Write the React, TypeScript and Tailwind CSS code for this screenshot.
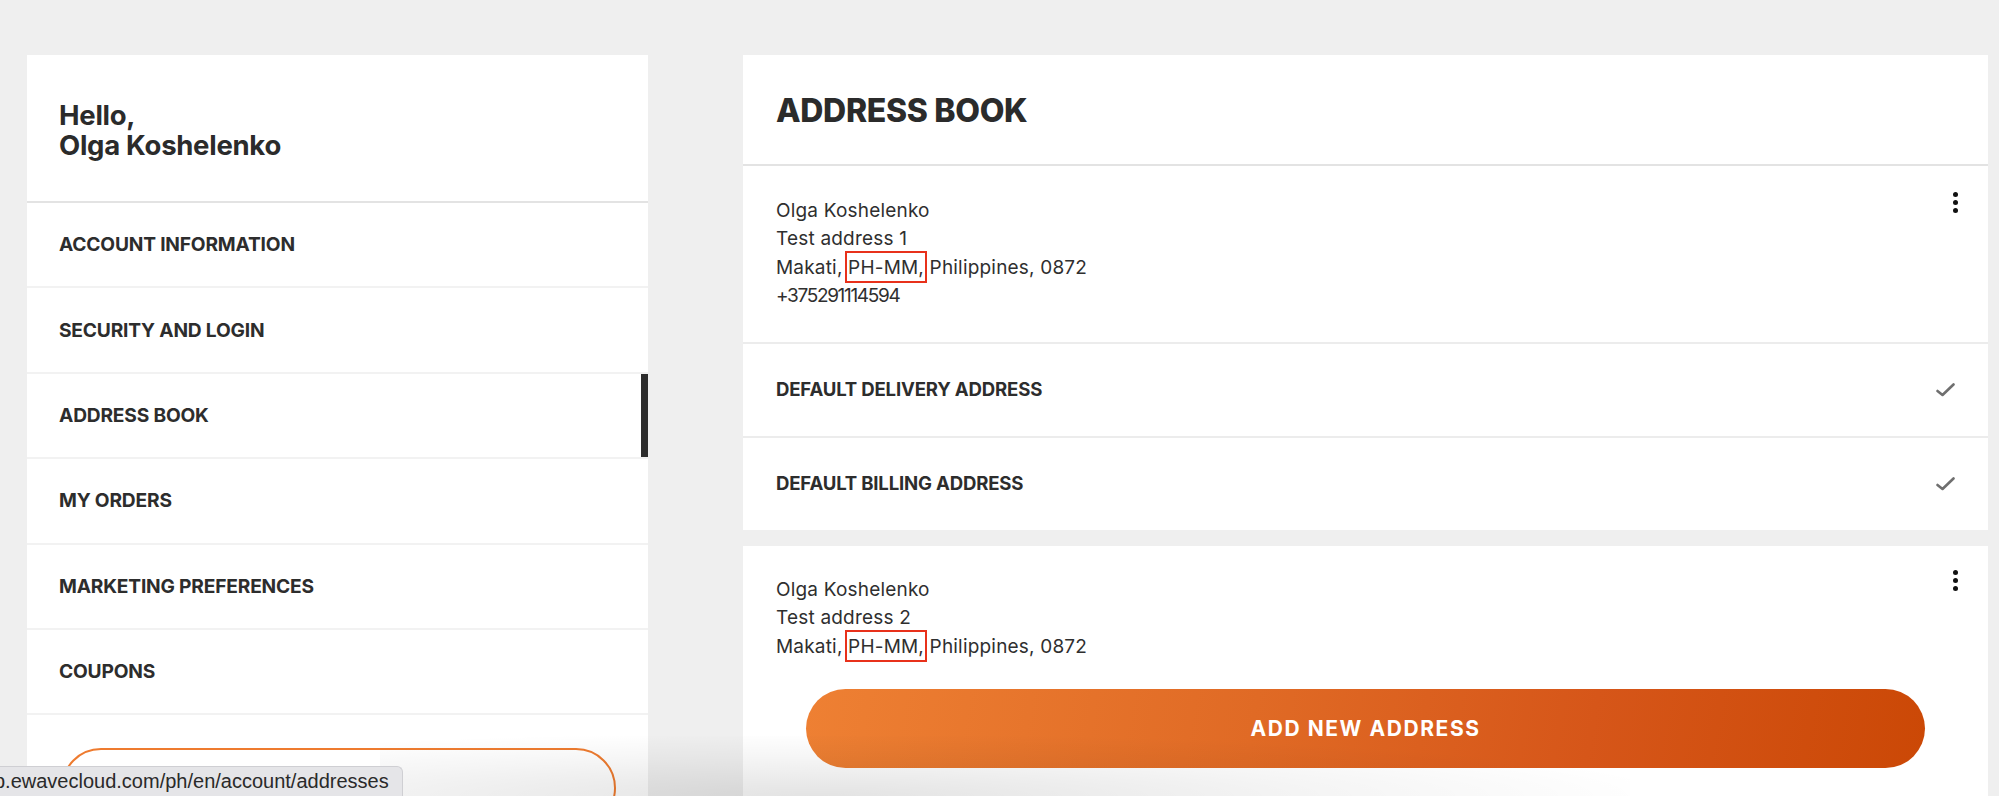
import React from "react";

const navItems = [
  "ACCOUNT INFORMATION",
  "SECURITY AND LOGIN",
  "ADDRESS BOOK",
  "MY ORDERS",
  "MARKETING PREFERENCES",
  "COUPONS",
];

function Kebab() {
  return (
    <div className="flex flex-col items-center gap-[3px] pt-[1px]">
      <span className="block h-[5px] w-[5px] rounded-full bg-[#111]" />
      <span className="block h-[5px] w-[5px] rounded-full bg-[#111]" />
      <span className="block h-[5px] w-[5px] rounded-full bg-[#111]" />
    </div>
  );
}

function Check() {
  return (
    <svg width="19" height="14" viewBox="0 0 19 14" fill="none">
      <path
        d="M1.5 8 L6.5 12 L17.5 1.5"
        stroke="#6f6f6f"
        strokeWidth="2.6"
        strokeLinecap="round"
        strokeLinejoin="round"
      />
    </svg>
  );
}

function Marked({ children }: { children: React.ReactNode }) {
  return (
    <span className="relative">
      {children}
      <span className="pointer-events-none absolute -left-[3px] -right-[3px] -top-[5px] -bottom-[4px] border-2 border-[#e8311b]" />
    </span>
  );
}

function AddressLines({ line2, phone }: { line2: string; phone?: string }) {
  return (
    <div className="text-[19px] leading-[28.3px] tracking-[0.01em] text-[#2f2f2f]">
      <div>Olga Koshelenko</div>
      <div>{line2}</div>
      <div>
        Makati, <Marked>PH-MM,</Marked> Philippines, 0872
      </div>
      {phone && <div className="tracking-[-0.07em]">{phone}</div>}
    </div>
  );
}

export default function App() {
  return (
    <div className="relative h-[796px] w-[1999px] overflow-hidden bg-[#efefef] font-['Inter','Liberation_Sans',sans-serif] text-[#2b2b2b]">
      <div className="flex items-start pl-[27px] pt-[55px]">
        {/* Sidebar */}
        <aside className="w-[621px] shrink-0 bg-white">
          <div className="flex flex-col gap-[1px] border-b-2 border-[#e3e3e3] pb-[41px] pl-[32px] pt-[46px] text-[27.5px] font-bold leading-[29px] tracking-[-0.01em] text-[#2b2b2b]">
            <div>Hello,</div>
            <div>Olga Koshelenko</div>
          </div>
          <nav>
            {navItems.map((item) => (
              <div
                key={item}
                className="relative flex h-[85.4px] items-center border-b-2 border-[#f2f2f2] pl-[32px] text-[19.2px] font-bold tracking-[-0.01em] text-[#2d2d2d]"
              >
                {item}
                {item === "ADDRESS BOOK" && (
                  <span className="absolute bottom-0 right-0 top-0 w-[7px] bg-[#2d2d2d]" />
                )}
              </div>
            ))}
          </nav>
          <div className="pb-[40px] pl-[34px] pr-[32px] pt-[33px]">
            <div className="h-[80px] w-full rounded-full border-2 border-[#ee7b2f]" />
          </div>
        </aside>

        {/* Main */}
        <main className="ml-[95px] w-[1245px] shrink-0">
          <div className="bg-white">
            <div className="flex h-[111px] items-center border-b-2 border-[#e3e3e3] pl-[33px] pt-[2px]">
              <h1 className="text-[32px] font-extrabold leading-none tracking-[-0.01em] text-[#2b2b2b]">
                ADDRESS BOOK
              </h1>
            </div>

            <div className="flex h-[178px] items-start justify-between border-b-2 border-[#ececec] pl-[33px] pr-[30px] pt-[31px]">
              <AddressLines line2="Test address 1" phone="+375291114594" />
              <div className="-mt-[6px]">
                <Kebab />
              </div>
            </div>

            <div className="flex h-[94px] items-center justify-between border-b-2 border-[#ececec] pl-[33px] pr-[33px]">
              <span className="text-[18.6px] font-bold tracking-[-0.01em] text-[#2d2d2d]">
                DEFAULT DELIVERY ADDRESS
              </span>
              <Check />
            </div>
            <div className="flex h-[92px] items-center justify-between pl-[33px] pr-[33px]">
              <span className="text-[18.6px] font-bold tracking-[-0.01em] text-[#2d2d2d]">
                DEFAULT BILLING ADDRESS
              </span>
              <Check />
            </div>
          </div>

          <div className="mt-[16px] bg-white pb-[40px]">
            <div className="flex items-start justify-between pl-[33px] pr-[30px] pt-[30px]">
              <AddressLines line2="Test address 2" />
              <div className="-mt-[7px]">
                <Kebab />
              </div>
            </div>
            <div className="px-[63px] pt-[28px]">
              <button className="flex h-[79px] w-full items-center justify-center rounded-full bg-[linear-gradient(100deg,#ee8033_0%,#e06a25_40%,#d65619_70%,#cb4806_100%)] text-[21px] font-bold tracking-[0.075em] text-white">
                ADD NEW ADDRESS
              </button>
            </div>
          </div>
        </main>
      </div>

      {/* bottom shade */}
      <div className="pointer-events-none absolute bottom-0 left-[380px] h-[60px] w-[1250px] bg-[radial-gradient(ellipse_at_35%_100%,rgba(0,0,0,0.11)_0%,rgba(0,0,0,0.04)_45%,transparent_75%)]" />

      {/* status bubble */}
      <div className="absolute bottom-0 left-0 h-[30px] w-[403px] overflow-hidden rounded-tr-[6px] border-r border-t border-[#cfcfd3] bg-[#e5e5e8]">
        <div className="-ml-[6px] whitespace-nowrap pt-[2px] font-['Liberation_Sans',Arial,sans-serif] text-[20px] leading-[24px] text-[#2a2a2a]">
          p.ewavecloud.com/ph/en/account/addresses
        </div>
      </div>
    </div>
  );
}
